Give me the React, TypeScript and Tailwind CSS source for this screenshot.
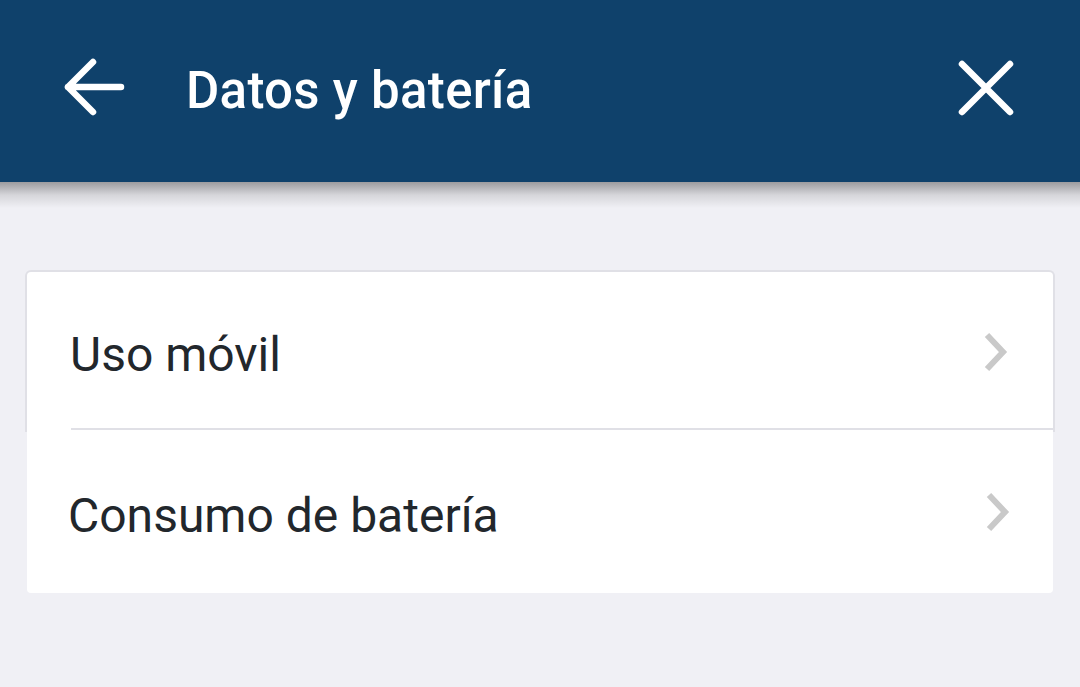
function Chevron() {
    return (
        <svg width="28" height="42" viewBox="0 0 28 42" className="shrink-0">
            <path d="M5 4 L21 21 L5 38" fill="none" stroke="#c9c9c9" strokeWidth="6" />
        </svg>
    );
}

export default function App() {
    return (
        <div className="w-[1080px] h-[687px] bg-[#f0f0f5] overflow-hidden font-['Roboto',sans-serif]">
            {/* Toolbar */}
            <div className="relative z-10">
                <div className="h-[182px] bg-[#0f416b] flex items-center pl-[61px] pr-[64px]">
                    <svg width="66" height="62" viewBox="0 0 66 62" className="shrink-0 -mt-[8px]">
                        <path
                            d="M7 31 L60 31 M32 6 L7 31 L32 56"
                            fill="none"
                            stroke="white"
                            strokeWidth="6.5"
                            strokeLinecap="round"
                            strokeLinejoin="round"
                        />
                    </svg>
                    <h1 className="ml-[59px] flex-1 text-white text-[51px] font-medium tracking-[0.3px]">
                        Datos y batería
                    </h1>
                    <svg width="60" height="60" viewBox="0 0 60 60" className="shrink-0 -mt-[6px]">
                        <path
                            d="M6 6 L54 54 M54 6 L6 54"
                            fill="none"
                            stroke="white"
                            strokeWidth="6.5"
                            strokeLinecap="round"
                        />
                    </svg>
                </div>
                {/* toolbar shadow */}
                <div className="absolute left-0 right-0 top-[182px] h-[26px] bg-gradient-to-b from-[#9c9c9f] via-[#d6d6da] to-[#f0f0f5]" />
            </div>

            {/* List */}
            <div className="mt-[88px] mx-[25px]">
                <div className="bg-white border-2 border-b-0 border-[#e0e0e6] rounded-t-[6px] h-[162px] flex items-center pl-[43px] pr-[43px]">
                    <span className="flex-1 text-[48px] text-[#22272c] pt-[6px]">Uso móvil</span>
                    <Chevron />
                </div>
                <div className="mx-[2px] bg-white rounded-b-[4px]">
                    <div className="ml-[44px] h-[2px] bg-[#e0e0e6] -mt-[4px]" />
                    <div className="h-[163px] flex items-center pl-[41px] pr-[41px]">
                        <span className="flex-1 text-[48px] text-[#22272c] pt-[8px]">Consumo de batería</span>
                        <Chevron />
                    </div>
                </div>
            </div>
        </div>
    );
}
